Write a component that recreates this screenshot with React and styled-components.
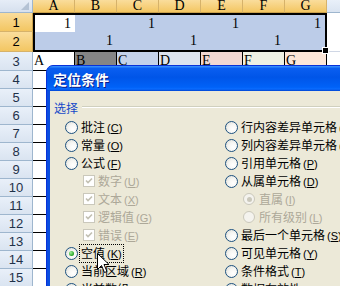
import React from "react";
import styled, { createGlobalStyle } from "styled-components";

const GlobalStyle = createGlobalStyle`
  html, body {
    margin: 0;
    padding: 0;
    background: #fff;
  }
  body {
    width: 340px;
    height: 286px;
    overflow: hidden;
  }
`;

const Screen = styled.div`
  position: relative;
  width: 340px;
  height: 286px;
  overflow: hidden;
  background: #fff;
`;

/* ---------- spreadsheet ---------- */

const Sheet = styled.div`
  display: flex;
  flex-direction: column;
  font-family: "Liberation Serif", serif;
  color: #000;
`;

const HeaderRow = styled.div`
  display: flex;
  height: 13px;
`;

const Corner = styled.div`
  box-sizing: border-box;
  width: 33px;
  flex: none;
  display: flex;
  justify-content: flex-end;
  align-items: flex-end;
  padding: 0 3px 2px 0;
  background: linear-gradient(#e6edf7, #d6e0ee);
  border-right: 1px solid #9eb6ce;
  border-bottom: 1px solid #9eb6ce;
`;

const Triangle = styled.div`
  width: 0;
  height: 0;
  border-left: 8px solid transparent;
  border-bottom: 8px solid #b4c2d4;
`;

const gold = "linear-gradient(#fadd9c, #f3c662)";
const blue = "linear-gradient(#e9f0f9, #dae4f1)";

const ColHead = styled.div`
  box-sizing: border-box;
  width: ${p => p.w || 42}px;
  flex: none;
  display: flex;
  align-items: center;
  justify-content: center;
  font-size: 14px;
  line-height: 12px;
  background: ${p => (p.selected ? gold : blue)};
  border-right: 1px solid ${p => (p.selected ? "#d6b26a" : "#9eb6ce")};
  border-bottom: 1px solid ${p => (p.selected ? "#c9a04c" : "#9eb6ce")};
`;

const Body = styled.div`
  display: flex;
`;

const RowHeads = styled.div`
  display: flex;
  flex-direction: column;
  width: 33px;
  flex: none;
`;

const RowHead = styled.div`
  box-sizing: border-box;
  height: ${p => p.h}px;
  display: flex;
  align-items: center;
  justify-content: center;
  font-family: "Liberation Sans", sans-serif;
  font-size: 13px;
  color: ${p => (p.selected ? "#000" : "#1f3149")};
  background: ${p => (p.selected ? gold : blue)};
  border-right: 1px solid ${p => (p.selected ? "#c9a04c" : "#9eb6ce")};
  border-bottom: 1px solid ${p => (p.selected ? "#d6b26a" : "#9eb6ce")};
`;

const Cells = styled.div`
  display: flex;
  flex-direction: column;
  flex: 1;
`;

const SelBand = styled.div`
  display: flex;
  height: 39px;
`;

const Selection = styled.div`
  position: relative;
  box-sizing: border-box;
  width: 294px;
  flex: none;
  border: 2px solid #000;
  display: flex;
  flex-direction: column;
`;

const FillHandle = styled.div`
  position: absolute;
  right: -4px;
  bottom: -4px;
  width: 5px;
  height: 5px;
  background: #000;
  border: 1px solid #fff;
`;

const SelRow = styled.div`
  display: flex;
  height: ${p => p.h}px;
`;

const SelCell = styled.div`
  box-sizing: border-box;
  width: ${p => p.w}px;
  flex: none;
  padding-right: 4px;
  text-align: right;
  font-size: 14px;
  line-height: ${p => p.h}px;
  background: ${p => (p.active ? "#fff" : "#bccce8")};
`;

const Filler = styled.div`
  flex: 1;
  background: #fff;
  border-bottom: 1px solid #d0d7e5;
`;

const Row = styled.div`
  display: flex;
  height: ${p => p.h}px;
`;

const Cell = styled.div`
  box-sizing: border-box;
  width: 42px;
  flex: none;
  padding-left: 1px;
  font-size: 14px;
  line-height: ${p => p.h - 1}px;
  background: ${p => p.bg || "#fff"};
  border-right: 1px solid #000;
  border-bottom: 1px solid #000;
`;

/* ---------- dialog ---------- */

const Dialog = styled.div`
  position: absolute;
  left: 46px;
  top: 65px;
  width: 340px;
  height: 240px;
  display: flex;
  flex-direction: column;
  background: #0a4ee0;
  border: 1px solid #0831d9;
  border-radius: 7px 7px 0 0;
  font-family: "Noto Sans CJK SC", "Liberation Sans", sans-serif;
`;

const TitleBar = styled.div`
  height: 25px;
  flex: none;
  display: flex;
  align-items: center;
  padding-left: 6px;
  border-radius: 6px 6px 0 0;
  background: linear-gradient(
    #3d95ff 0%,
    #0a5ef0 10%,
    #0055e8 45%,
    #0062f8 85%,
    #0a6cff 92%,
    #0045d2 100%
  );
`;

const Title = styled.span`
  color: #fff;
  font-size: 14px;
  font-weight: bold;
  text-shadow: 1px 1px 0 #0a1e8c;
`;

const CapButton = styled.div`
  box-sizing: border-box;
  width: 21px;
  height: 20px;
  flex: none;
  margin-left: ${p => (p.first ? "auto" : "2px")};
  border: 1px solid #fff;
  border-radius: 3px;
  background: ${p =>
    p.red
      ? "linear-gradient(135deg, #f08a6c, #d6402a)"
      : "linear-gradient(135deg, #4f8df8, #1557e6)"};
`;

const Panel = styled.div`
  flex: 1;
  margin: 0 3px 0 3px;
  padding: 8px 0 0 4px;
  background: #ece9d8;
`;

const Legend = styled.div`
  display: flex;
  align-items: center;
  height: 16px;
  font-size: 12px;
  color: #1548c8;
`;

const Rule = styled.div`
  flex: 1;
  margin-left: 4px;
  border-top: 1px solid #d0d0bf;
  border-bottom: 1px solid #fff;
`;

const Columns = styled.div`
  display: grid;
  grid-template-columns: 160px 1fr;
  margin-top: 3px;
  padding-left: 11px;
`;

const Column = styled.div`
  display: flex;
  flex-direction: column;
`;

const Option = styled.div`
  display: flex;
  align-items: center;
  height: 18px;
  padding-left: ${p => p.indent || 0}px;
  white-space: nowrap;
  font-size: 12px;
  line-height: 14px;
  color: ${p => (p.disabled ? "#aca899" : "#000")};
`;

const Radio = styled.span`
  box-sizing: border-box;
  width: ${p => p.size || 13}px;
  height: ${p => p.size || 13}px;
  flex: none;
  margin-right: ${p => p.gap || 3}px;
  border-radius: 50%;
  border: 1px solid ${p => (p.disabled ? "#cac8bb" : "#1c5180")};
  background: ${p =>
    p.disabled
      ? "#f4f3ee"
      : "radial-gradient(circle at 65% 65%, #fff 0%, #f6f6f3 45%, #d8d8d0 100%)"};
  display: flex;
  align-items: center;
  justify-content: center;
`;

const Dot = styled.span`
  width: 5px;
  height: 5px;
  border-radius: 50%;
  background: ${p =>
    p.disabled
      ? "#cac8bb"
      : "radial-gradient(circle at 35% 35%, #9ff09a, #21a121 70%, #1a7a1a)"};
`;

const Check = styled.span`
  box-sizing: border-box;
  width: 12px;
  height: 12px;
  flex: none;
  margin-right: 3px;
  border: 1px solid #cac8bb;
  background: #fff;
  display: flex;
  align-items: center;
  justify-content: center;
`;

const Label = styled.span`
  border: 1px dotted ${p => (p.focused ? "#000" : "transparent")};
  padding: 1px 1px;
  margin-left: -2px;
`;

const Key = styled.span`
  font-family: "Liberation Sans", sans-serif;
  font-size: 11px;
  margin-left: 2px;
  u {
    text-decoration: underline;
  }
`;

const Cursor = styled.svg`
  position: absolute;
  left: 97px;
  top: 253px;
`;

const colLetters = ["A", "B", "C", "D", "E", "F", "G"];
const row3 = [
  ["A", "#fff"],
  ["B", "#858585"],
  ["C", "#c4d2ea"],
  ["D", "#dce3ee"],
  ["E", "#f2d8d2"],
  ["F", "#eef0e3"],
  ["G", "#fce6d8"]
];

const left = [
  { t: "批注", k: "C" },
  { t: "常量", k: "O" },
  { t: "公式", k: "F" },
  { t: "数字", k: "U", check: true },
  { t: "文本", k: "X", check: true },
  { t: "逻辑值", k: "G", check: true },
  { t: "错误", k: "E", check: true },
  { t: "空值", k: "K", on: true, focused: true },
  { t: "当前区域", k: "R" },
  { t: "当前数组", k: "A" }
];

const right = [
  { t: "行内容差异单元格", k: "W" },
  { t: "列内容差异单元格", k: "M" },
  { t: "引用单元格", k: "P" },
  { t: "从属单元格", k: "D" },
  { t: "直属", k: "I", sub: true, on: true },
  { t: "所有级别", k: "L", sub: true },
  { t: "最后一个单元格", k: "S" },
  { t: "可见单元格", k: "Y" },
  { t: "条件格式", k: "T" },
  { t: "数据有效性", k: "V" }
];

function Tick() {
  return (
    <svg width="8" height="8" viewBox="0 0 8 8">
      <path d="M1 3.5 L3 5.5 L7 1.5" fill="none" stroke="#c2c0b2" strokeWidth="1.6" />
    </svg>
  );
}

function Item({ o }) {
  const disabled = o.check || o.sub;
  return (
    <Option indent={disabled ? 18 : 0} disabled={disabled}>
      {o.check ? (
        <Check>
          <Tick />
        </Check>
      ) : (
        <Radio disabled={o.sub} size={o.sub ? 12 : 13} gap={o.sub ? 4 : 3}>
          {o.on && <Dot disabled={o.sub} />}
        </Radio>
      )}
      <Label focused={o.focused}>
        {o.t}
        <Key>
          (<u>{o.k}</u>)
        </Key>
      </Label>
    </Option>
  );
}

export default function App() {
  const rowNums = [];
  for (let i = 4; i <= 15; i++) rowNums.push(i);

  return (
    <Screen>
      <GlobalStyle />
      <Sheet>
        <HeaderRow>
          <Corner>
            <Triangle />
          </Corner>
          {colLetters.map(c => (
            <ColHead key={c} selected>
              {c}
            </ColHead>
          ))}
          <ColHead w={42}>H</ColHead>
        </HeaderRow>

        <Body>
          <RowHeads>
            <RowHead h={19} selected>1</RowHead>
            <RowHead h={20} selected>2</RowHead>
            <RowHead h={19}>3</RowHead>
            {rowNums.map(n => (
              <RowHead key={n} h={18}>
                {n}
              </RowHead>
            ))}
          </RowHeads>

          <Cells>
            <SelBand>
              <Selection>
                <SelRow h={17}>
                  <SelCell w={40} h={17} active>1</SelCell>
                  <SelCell w={42} h={17} />
                  <SelCell w={42} h={17}>1</SelCell>
                  <SelCell w={42} h={17} />
                  <SelCell w={42} h={17}>1</SelCell>
                  <SelCell w={42} h={17} />
                  <SelCell w={40} h={17}>1</SelCell>
                </SelRow>
                <SelRow h={18}>
                  <SelCell w={40} h={18} />
                  <SelCell w={42} h={18}>1</SelCell>
                  <SelCell w={42} h={18} />
                  <SelCell w={42} h={18}>1</SelCell>
                  <SelCell w={42} h={18} />
                  <SelCell w={42} h={18}>1</SelCell>
                  <SelCell w={40} h={18} />
                </SelRow>
                <FillHandle />
              </Selection>
              <Filler />
            </SelBand>

            <Row h={19}>
              {row3.map(([t, bg]) => (
                <Cell key={t} h={19} bg={bg}>
                  {t}
                </Cell>
              ))}
            </Row>

            {rowNums.map(n => (
              <Row key={n} h={18}>
                <Cell h={18} />
                <Cell h={18} />
              </Row>
            ))}
          </Cells>
        </Body>
      </Sheet>

      <Dialog>
        <TitleBar>
          <Title>定位条件</Title>
          <CapButton first />
          <CapButton red />
        </TitleBar>
        <Panel>
          <Legend>
            选择
            <Rule />
          </Legend>
          <Columns>
            <Column>
              {left.map(o => (
                <Item key={o.t} o={o} />
              ))}
            </Column>
            <Column>
              {right.map(o => (
                <Item key={o.t} o={o} />
              ))}
            </Column>
          </Columns>
        </Panel>
      </Dialog>

      <Cursor width="13" height="21" viewBox="0 0 13 21">
        <path
          d="M0.5 0.5 L0.5 16.5 L4.5 12.5 L7.5 19.5 L10 18.5 L7 11.5 L12 11.5 Z"
          fill="#fff"
          stroke="#000"
          strokeWidth="1"
        />
      </Cursor>
    </Screen>
  );
}
